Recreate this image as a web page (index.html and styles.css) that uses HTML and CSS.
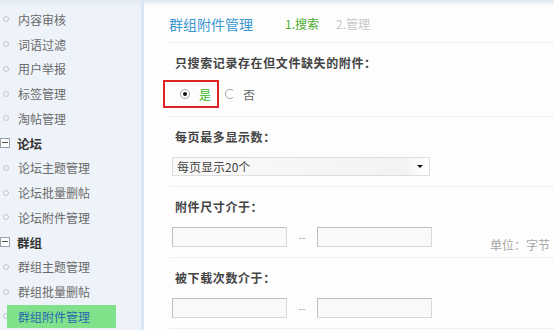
FILE: index.html
```html
<!DOCTYPE html>
<html lang="zh-CN">
<head>
<meta charset="utf-8">
<link rel="stylesheet" href="styles.css">
</head>
<body>
<div class="topstrip"></div>
<div class="layout">
  <nav class="sidebar">
    <div class="item"><span class="dot"></span>内容审核</div>
    <div class="item"><span class="dot"></span>词语过滤</div>
    <div class="item"><span class="dot"></span>用户举报</div>
    <div class="item"><span class="dot"></span>标签管理</div>
    <div class="item"><span class="dot"></span>淘帖管理</div>
    <div class="group"><span class="box"></span>论坛</div>
    <div class="item"><span class="dot"></span>论坛主题管理</div>
    <div class="item"><span class="dot"></span>论坛批量删帖</div>
    <div class="item"><span class="dot"></span>论坛附件管理</div>
    <div class="group"><span class="box"></span>群组</div>
    <div class="item"><span class="dot"></span>群组主题管理</div>
    <div class="item"><span class="dot"></span>群组批量删帖</div>
    <div class="item active"><span class="dot"></span><span class="hl">群组附件管理</span></div>
  </nav>
  <main class="main">
    <div class="header">
      <span class="title">群组附件管理</span>
      <span class="step on">1.搜索</span>
      <span class="step">2.管理</span>
    </div>
    <section class="sec sec1">
      <div class="label">只搜索记录存在但文件缺失的附件：</div>
      <div class="radios">
        <span class="redbox"><span class="radio checked"></span><span class="yes">是</span></span>
        <span class="radio"></span><span class="no">否</span>
      </div>
    </section>
    <section class="sec">
      <div class="label">每页最多显示数：</div>
      <div class="select"><span>每页显示20个</span><span class="arrow"></span></div>
    </section>
    <section class="sec">
      <div class="label">附件尺寸介于：</div>
      <div class="range">
        <span class="input"></span><span class="dash">--</span><span class="input"></span>
        <span class="unit">单位：字节</span>
      </div>
    </section>
    <section class="sec">
      <div class="label">被下载次数介于：</div>
      <div class="range">
        <span class="input"></span><span class="dash">--</span><span class="input"></span>
      </div>
    </section>
  </main>
</div>
</body>
</html>
```
FILE: styles.css
```css
html, body {
  margin: 0;
  padding: 0;
  height: 100%;
  overflow: hidden;
}
body {
  font-family: "Noto Sans CJK SC", "Liberation Sans", sans-serif;
  font-size: 12px;
  background: #fdfdfe;
  color: #555;
  position: relative;
}
.topstrip {
  position: absolute;
  left: 0;
  top: 0;
  right: 0;
  height: 6px;
  background: linear-gradient(#dfe9f4, rgba(238, 244, 250, 0));
}
.layout {
  display: flex;
  height: 330px;
}
.sidebar {
  width: 144px;
  flex: none;
  background: #eef3f9;
  border-right: 3px solid #d9e6f3;
  padding-top: 7px;
  box-sizing: border-box;
}
.item, .group {
  height: 24.75px;
  display: flex;
  align-items: center;
  color: #6a6a6a;
  font-size: 12px;
  white-space: nowrap;
}
.dot {
  width: 4px;
  height: 4px;
  border: 1px solid #c4c9cf;
  border-radius: 50%;
  margin-left: 3px;
  margin-right: 9px;
  flex: none;
}
.group {
  font-weight: bold;
  color: #333;
  font-size: 12.5px;
}
.box {
  width: 10px;
  height: 10px;
  border: 1px solid #9aa3ad;
  background: #fff;
  margin-right: 7px;
  flex: none;
  position: relative;
  box-sizing: border-box;
}
.box::after {
  content: "";
  position: absolute;
  left: 1px;
  right: 1px;
  top: 3px;
  height: 1px;
  background: #555;
}
.hl {
  background: #7fe18a;
  color: #2a6aae;
  margin-left: -11px;
  padding: 0 16px 0 11px;
  height: 23px;
  line-height: 23px;
  width: 82px;
}
.main {
  flex: 1;
  padding-left: 28px;
  padding-top: 5px;
  background: #fdfdfe;
}
.header {
  height: 37px;
  border-bottom: 1px solid #eceef0;
  display: flex;
  align-items: center;
  margin-left: -3px;
}
.title {
  color: #3a97d0;
  font-size: 14px;
  width: 116px;
}
.step {
  color: #c8c8c8;
  font-size: 12px;
  margin-right: 17px;
}
.step.on {
  color: #4aac2c;
}
.sec {
  border-bottom: 1px solid #eef0f2;
  padding: 10px 0;
  margin-left: -3px;
}
.label {
  font-weight: bold;
  color: #444;
  line-height: 20px;
  padding-left: 6px;
  font-size: 12px;
  letter-spacing: 0.6px;
}
.sec > :last-child {
  margin-top: 10px;
}
.sec1 {
  padding-bottom: 8px;
}
.sec1 .radios {
  margin-top: 7px;
  display: flex;
  align-items: center;
  height: 28px;
}
.redbox {
  display: flex;
  align-items: center;
  box-sizing: border-box;
  height: 28px;
  width: 56px;
  border: 2px solid #de2323;
  padding-left: 15px;
  margin-left: -6px;
}
.radio {
  width: 8px;
  height: 8px;
  border: 1px solid #a4a4a4;
  border-radius: 50%;
  background: #fff;
  position: relative;
  flex: none;
}
.radio.checked::after {
  content: "";
  position: absolute;
  left: 2px;
  top: 2px;
  width: 4px;
  height: 4px;
  border-radius: 50%;
  background: #111;
}
.radios > .radio {
  margin-left: 6px;
  border-right-color: transparent;
}
.yes {
  color: #3cb826;
  margin-left: 9px;
}
.no {
  color: #666;
  margin-left: 8px;
}
.select {
  margin-left: 3px;
  width: 258px;
  height: 19px;
  box-sizing: border-box;
  border: 1px solid #dedede;
  background: linear-gradient(90deg, #fafafa, #f3f3f3 90%, #fff);
  display: flex;
  align-items: center;
  justify-content: space-between;
  padding: 0 6px 0 4px;
  color: #444;
  font-size: 12px;
}
.arrow {
  width: 0;
  height: 0;
  border-left: 3px solid transparent;
  border-right: 3px solid transparent;
  border-top: 3px solid #111;
}
.range {
  display: flex;
  align-items: center;
  height: 20px;
  margin-left: 3px;
}
.input {
  width: 115px;
  height: 20px;
  box-sizing: border-box;
  border: 1px solid #bfbfbf;
  border-bottom-color: #d8d8d8;
  border-right-color: #d8d8d8;
  background: #f9f9f9;
}
.dash {
  color: #aaa;
  width: 30px;
  text-align: center;
  font-size: 11px;
}
.unit {
  color: #a6a6a6;
  margin-left: 58px;
  margin-top: 14px;
  white-space: nowrap;
}
```
